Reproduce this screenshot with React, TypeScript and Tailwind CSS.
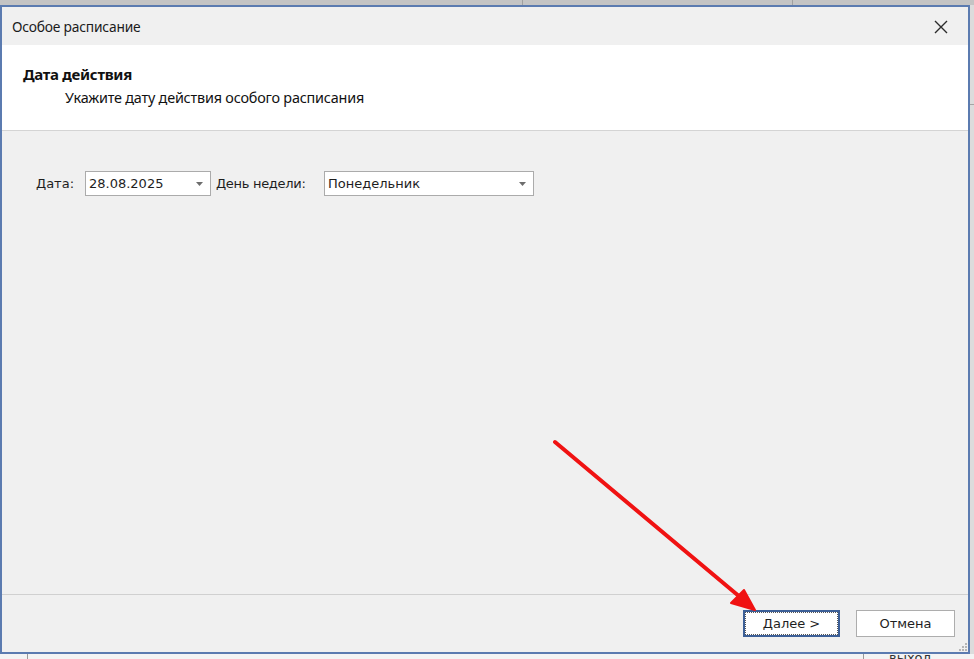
function Caret() {
  return (
    <svg viewBox="0 0 7 4" className="h-[4px] w-[7px]" aria-hidden="true">
      <path d="M0 0h7L3.5 4z" fill="#6d6d6d" />
    </svg>
  )
}

function ComboBox({ value, width }: { value: string; width: string }) {
  return (
    <div className={`flex h-[25px] items-center border border-[#ababab] bg-white pl-[3px] pr-[7px] ${width}`}>
      <span className="flex-1 text-[13px] text-[#1e1e1e]">{value}</span>
      <Caret />
    </div>
  )
}

export default function App() {
  return (
    <div className="relative h-[659px] w-[974px] overflow-hidden bg-[#e9e9e9] font-['DejaVu_Sans',sans-serif]">
      {/* strip of the app behind, above the dialog */}
      <div className="flex h-[5px] bg-[#c4c4c4]">
        <div className="w-[523px] border-r border-[#a0a0a0]" />
        <div className="w-[270px] border-r border-[#a0a0a0]" />
        <div className="flex-1" />
      </div>

      <div className="flex">
        {/* dialog window */}
        <div className="flex h-[649px] w-[970px] flex-col border-2 border-[#5b7bb0] bg-[#f0f0f0]">
          <div className="flex h-[38px] shrink-0 items-center justify-between pl-[10px] pr-[20px] pt-[2px] font-['Noto_Sans',sans-serif] text-[13.8px] text-[#1b1b1b]">
            <span className="tracking-[-0.2px]">Особое расписание</span>
            <svg viewBox="0 0 14 14" className="h-[14px] w-[14px]" aria-hidden="true">
              <path d="M1 1l12 12M13 1L1 13" stroke="#2b2b2b" strokeWidth="1.4" />
            </svg>
          </div>

          <div className="h-[86px] shrink-0 border-b border-[#d4d4d4] bg-white pl-[21px] pt-[20px] font-['Noto_Sans',sans-serif] text-[#111]">
            <div className="text-[15px] font-bold leading-[19px] tracking-[-0.3px]">Дата действия</div>
            <div className="mt-[4px] pl-[42px] text-[14.4px] leading-[19px] tracking-[-0.2px]">
              Укажите дату действия особого расписания
            </div>
          </div>

          <div className="flex-1 pl-[34px] pt-[40px]">
            <div className="flex items-center text-[13px] text-[#1e1e1e]">
              <span className="w-[49px]">Дата:</span>
              <ComboBox value="28.08.2025" width="w-[126px]" />
              <span className="ml-[5px] w-[108px] tracking-[-0.3px]">День недели:</span>
              <ComboBox value="Понедельник" width="w-[210px]" />
            </div>
          </div>

          <div className="relative flex h-[58px] shrink-0 items-start justify-end gap-[16px] border-t border-[#d0d0d0] pr-[13px] pt-[15px] text-[13px] text-[#1e1e1e]">
            <button className="flex h-[27px] w-[97px] items-center justify-center border-2 border-[#3c5f97] bg-white outline-1 outline-dotted outline-offset-[-3px] outline-[#555]">
              Далее &gt;
            </button>
            <button className="flex h-[27px] w-[99px] items-center justify-center border border-[#adadad] bg-white">
              Отмена
            </button>
            <div className="absolute bottom-[1px] right-[1px] grid grid-cols-3 gap-[1px]">
              <span />
              <span />
              <span className="h-[2px] w-[2px] bg-[#b5b5b5]" />
              <span />
              <span className="h-[2px] w-[2px] bg-[#b5b5b5]" />
              <span className="h-[2px] w-[2px] bg-[#b5b5b5]" />
              <span className="h-[2px] w-[2px] bg-[#b5b5b5]" />
              <span className="h-[2px] w-[2px] bg-[#b5b5b5]" />
              <span className="h-[2px] w-[2px] bg-[#b5b5b5]" />
            </div>
          </div>
        </div>

        {/* sliver of the app behind, right side */}
        <div className="flex-1 bg-[#dcdcdc]">
          <div className="mt-[40px] h-[60px] border-b border-[#a5a5a5]" />
        </div>
      </div>

      {/* sliver below */}
      <div className="flex h-[5px] overflow-hidden bg-[#f4f4f4]">
        <div className="w-[28px] border-r border-[#9a9a9a]" />
        <div className="w-[836px] border-r border-[#9a9a9a]" />
        <div className="-mt-[6px] pl-[25px] text-[13px] text-[#333]">выход</div>
      </div>

      {/* red annotation arrow */}
      <svg className="pointer-events-none absolute left-0 top-0" width="974" height="659" aria-hidden="true">
        <line x1="555" y1="442" x2="740" y2="597" stroke="#f01212" strokeWidth="4" strokeLinecap="round" />
        <path d="M755 610 L731 603 L744 590 Z" fill="#f01212" stroke="#f01212" strokeWidth="2" strokeLinejoin="round" />
      </svg>
    </div>
  )
}
